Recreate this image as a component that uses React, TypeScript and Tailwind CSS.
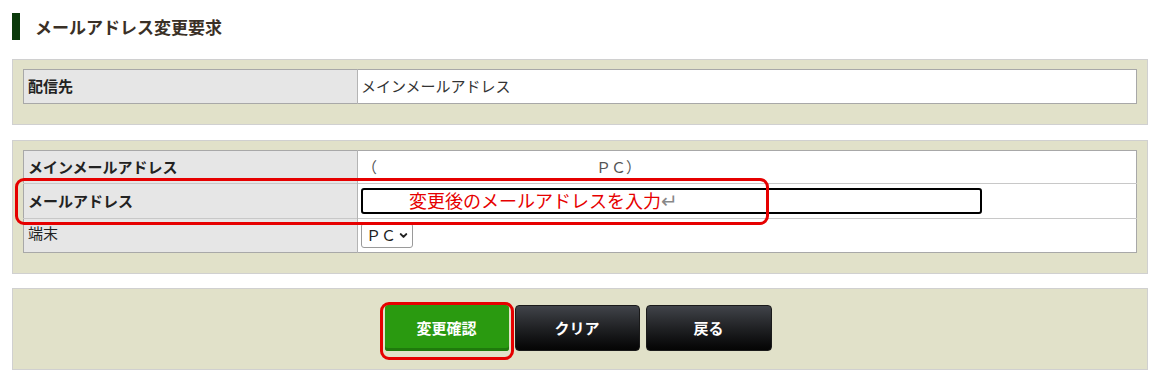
import { ChevronDown } from "lucide-react";

const FONT = { fontFamily: '"Noto Sans CJK JP", "Noto Sans", sans-serif' };

function LabelCell({ children, bold = true }: { children: React.ReactNode; bold?: boolean }) {
  return (
    <td
      className={
        "w-[334px] border-r border-[#b4b4b4] bg-[#e6e6e6] px-1 text-[15px] text-[#222] " +
        (bold ? "font-bold" : "font-normal pb-[5px]")
      }
    >
      {children}
    </td>
  );
}

function Panel({ children, className = "" }: { children: React.ReactNode; className?: string }) {
  return (
    <div className={"border border-[#d0d0d0] bg-[#e1e1c9] px-[10px] " + className}>{children}</div>
  );
}

export default function App() {
  return (
    <div style={FONT} className="relative h-[382px] w-[1160px] overflow-hidden bg-white px-3 pt-[13px]">
      {/* heading */}
      <div className="flex h-[27px] items-center">
        <div className="h-[27px] w-2 bg-[#0b3a0b]" />
        <h1 className="ml-[15px] text-[17px] font-bold leading-none text-[#3a3026]">メールアドレス変更要求</h1>
      </div>

      {/* 配信先 */}
      <Panel className="mt-[19px] pt-[9px] pb-[20px]">
        <table className="w-full border-collapse border border-[#a8a8a8]">
          <tbody>
            <tr className="h-[34px]">
              <LabelCell>配信先</LabelCell>
              <td className="bg-white px-[3px] text-[15px] text-[#333]">メインメールアドレス</td>
            </tr>
          </tbody>
        </table>
      </Panel>

      {/* form */}
      <Panel className="mt-[15px] pt-[9px] pb-[20px]">
        <table className="w-full border-collapse border border-[#a8a8a8]">
          <tbody>
            <tr className="h-[33px] border-b border-[#c8c8c8]">
              <LabelCell>メインメールアドレス</LabelCell>
              <td className="bg-white px-1 text-[15px] text-[#555]">
                （<span className="inline-block w-[219px]" />ＰＣ）
              </td>
            </tr>
            <tr className="h-[35px] border-b border-[#c8c8c8]">
              <LabelCell>メールアドレス</LabelCell>
              <td className="bg-white px-[3px]">
                <input
                  type="text"
                  className="block h-[26px] w-[621px] rounded-[3px] border-2 border-black bg-white outline-none"
                />
              </td>
            </tr>
            <tr className="h-[34px]">
              <LabelCell bold={false}>端末</LabelCell>
              <td className="bg-white px-[3px]">
                <div className="flex h-[25px] w-[52px] items-center gap-[2px] whitespace-nowrap rounded-[3px] border border-[#9a9a9a] bg-white pl-[4px] text-[15px] text-[#222]">
                  <span>ＰＣ</span>
                  <ChevronDown className="h-[11px] w-[11px] shrink-0" strokeWidth={4.5} />
                </div>
              </td>
            </tr>
          </tbody>
        </table>
      </Panel>

      {/* buttons */}
      <Panel className="mt-[14px] flex h-[82px] items-center justify-center gap-[6px] pb-[2px] pr-[14px]">
        <button className="h-[46px] w-[124px] rounded-[3px] bg-[#2a9a10] text-[15px] font-bold text-white shadow-[inset_0_-3px_0_#1f7a0c]">
          変更確認
        </button>
        <button className="h-[46px] w-[125px] rounded-[4px] border border-[#1a1a1a] bg-gradient-to-b from-[#41444a] to-[#050505] text-[15px] font-bold text-white">
          クリア
        </button>
        <button className="h-[46px] w-[126px] rounded-[4px] border border-[#1a1a1a] bg-gradient-to-b from-[#41444a] to-[#050505] text-[15px] font-bold text-white">
          戻る
        </button>
      </Panel>

      {/* annotations */}
      <div className="pointer-events-none absolute left-[15px] top-[178px] h-[47px] w-[754px] rounded-[9px] border-[3px] border-[#e60000]" />
      <div className="pointer-events-none absolute left-[409px] top-[186px] flex items-center text-[18px] leading-[28px] text-[#e60000]">
        変更後のメールアドレスを入力
        <span className="text-[20px] leading-none text-[#888]">↵</span>
      </div>
      <div className="pointer-events-none absolute left-[380px] top-[302px] h-[58px] w-[134px] rounded-[9px] border-[3px] border-[#e60000]" />
    </div>
  );
}
